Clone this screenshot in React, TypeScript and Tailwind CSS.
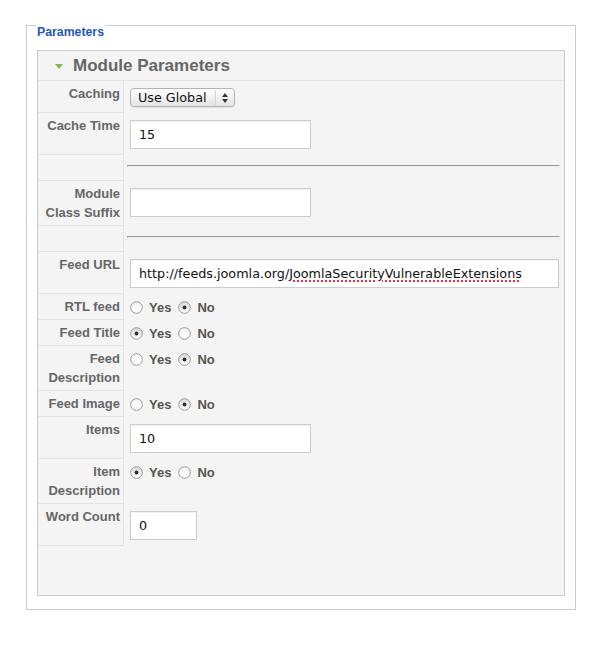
import React from "react";

const labelFont = { fontFamily: '"Liberation Sans", Arial, sans-serif' };

function Radio({ checked }: { checked: boolean }) {
  return (
    <svg width="13" height="13" viewBox="0 0 13 13" className="shrink-0">
      <defs>
        <linearGradient id={checked ? "rg1" : "rg0"} x1="0" y1="0" x2="0" y2="1">
          <stop offset="0" stopColor={checked ? "#d8d8d8" : "#f4f4f4"} />
          <stop offset="1" stopColor="#ffffff" />
        </linearGradient>
      </defs>
      <circle cx="6.5" cy="6.5" r="5.8" fill={`url(#${checked ? "rg1" : "rg0"})`} stroke="#8f8f8f" strokeWidth="0.9" />
      {checked && <circle cx="6.5" cy="6.5" r="1.9" fill="#2f2f2f" />}
    </svg>
  );
}

function YesNo({ yes }: { yes: boolean }) {
  return (
    <div className="flex items-center h-[19px] text-[13px] font-bold text-[#555]" style={labelFont}>
      <Radio checked={yes} />
      <span className="ml-[6px]">Yes</span>
      <span className="ml-[7px] flex items-center">
        <Radio checked={!yes} />
      </span>
      <span className="ml-[6px]">No</span>
    </div>
  );
}

function TextInput({ value, w, children }: { value?: string; w: string; children?: React.ReactNode }) {
  return (
    <div
      className={`${w} h-[29px] bg-white border border-[#cccccc] flex items-center pl-[8px] text-[12.75px] text-[#111] whitespace-nowrap overflow-hidden shadow-[inset_0_1px_1px_rgba(0,0,0,0.06)]`}
      style={{ fontFamily: '"DejaVu Sans", sans-serif' }}
    >
      {children ?? value}
    </div>
  );
}

function Row({
  label,
  children,
  kind,
}: {
  label: React.ReactNode;
  children?: React.ReactNode;
  kind: "input" | "radio" | "hr";
}) {
  return (
    <>
      <div
        className="border-b border-r border-[#e3e3e3] pt-[3px] pb-[3px] pr-[3px] text-right leading-[19px] text-[13px] font-bold text-[#666]"
        style={labelFont}
      >
        {label}
      </div>
      <div
        className={
          kind === "input"
            ? "pt-[7px] pb-[6px] pl-[6px]"
            : kind === "radio"
            ? "pt-[4px] pl-[6px]"
            : "pt-[10px] pl-[3px] pr-[4px]"
        }
      >
        {children}
      </div>
    </>
  );
}

function Hr() {
  return <div className="h-[2px] border-t border-l border-[#9a9a9a] border-b border-b-[#eeeeee] border-r border-r-[#eeeeee]" />;
}

export default function App() {
  return (
    <div className="bg-white w-[607px] h-[650px] pt-[25px] pl-[26px]">
      <div className="w-[550px] h-[585px] border-l border-r border-b border-[#cccccc] flex flex-col">
        <div className="flex items-start">
          <div className="w-[9px] border-t border-[#cccccc]" />
          <div
            className="px-[1px] text-[12.3px] leading-[14px] font-bold text-[#1f57bf]"
            style={labelFont}
          >
            Parameters
          </div>
          <div className="flex-1 border-t border-[#cccccc]" />
        </div>
        <div className="mt-[11px] mx-[10px] h-[546px] border border-[#cccccc] bg-[#f4f4f4] flex flex-col">
          <div className="h-[30px] border-b border-[#e3e3e3] flex items-center pl-[17px]">
            <svg width="8" height="5" viewBox="0 0 8 5" className="mt-[1px]">
              <polygon points="0,0 8,0 4,5" fill="#80bc4a" />
            </svg>
            <span className="ml-[10px] text-[17px] font-bold text-[#666]" style={labelFont}>
              Module Parameters
            </span>
          </div>
          <div className="grid grid-cols-[86px_1fr]">
            <Row label="Caching" kind="input">
              <div
                className="w-[105px] h-[19px] rounded-[4px] border border-[#b3b3b3] bg-gradient-to-b from-white to-[#e4e4e4] flex items-center shadow-[0_1px_1px_rgba(0,0,0,0.08)] text-[12.75px] text-[#111]"
                style={{ fontFamily: '"DejaVu Sans", sans-serif' }}
              >
                <span className="pl-[7px] flex-1">Use Global</span>
                <div className="w-px h-[15px] bg-[#d5d5d5]" />
                <div className="w-[18px] flex justify-center">
                  <svg width="6" height="10" viewBox="0 0 6 10">
                    <polygon points="3,0 6,4 0,4" fill="#333" />
                    <polygon points="0,6 6,6 3,10" fill="#333" />
                  </svg>
                </div>
              </div>
            </Row>
            <Row label="Cache Time" kind="input">
              <TextInput w="w-[181px]" value="15" />
            </Row>
            <Row label={"\u00a0"} kind="hr">
              <Hr />
            </Row>
            <Row
              label={
                <>
                  Module
                  <br />
                  Class Suffix
                </>
              }
              kind="input"
            >
              <TextInput w="w-[181px]" value="" />
            </Row>
            <Row label={"\u00a0"} kind="hr">
              <Hr />
            </Row>
            <Row label="Feed URL" kind="input">
              <TextInput w="w-[429px]">
                http://feeds.joomla.org/
                <span className="underline decoration-dotted decoration-red-500 decoration-2 underline-offset-[3px]">
                  JoomlaSecurityVulnerableExtensions
                </span>
              </TextInput>
            </Row>
            <Row label="RTL feed" kind="radio">
              <YesNo yes={false} />
            </Row>
            <Row label="Feed Title" kind="radio">
              <YesNo yes={true} />
            </Row>
            <Row
              label={
                <>
                  Feed
                  <br />
                  Description
                </>
              }
              kind="radio"
            >
              <YesNo yes={false} />
            </Row>
            <Row label="Feed Image" kind="radio">
              <YesNo yes={false} />
            </Row>
            <Row label="Items" kind="input">
              <TextInput w="w-[181px]" value="10" />
            </Row>
            <Row
              label={
                <>
                  Item
                  <br />
                  Description
                </>
              }
              kind="radio"
            >
              <YesNo yes={true} />
            </Row>
            <Row label="Word Count" kind="input">
              <TextInput w="w-[67px]" value="0" />
            </Row>
          </div>
        </div>
      </div>
    </div>
  );
}
